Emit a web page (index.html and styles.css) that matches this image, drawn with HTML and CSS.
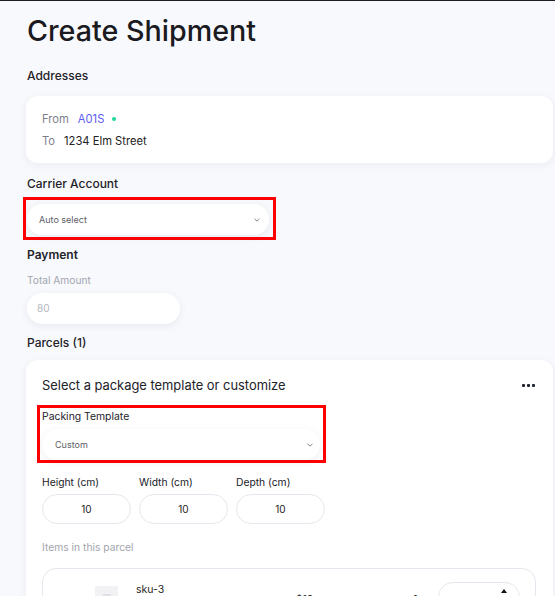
FILE: index.html
```html
<!DOCTYPE html>
<html lang="en">
<head>
    <meta charset="UTF-8">
    <meta name="viewport" content="width=device-width, initial-scale=1.0">
    <title>Create Shipment</title>
    <link rel="stylesheet" href="styles.css">
</head>
<body>
    <div class="page">
        <h1>Create Shipment</h1>

        <p class="section-label first">Addresses</p>
        <div class="card address-card">
            <div class="address-row">
                <span class="muted">From</span>
                <span class="sender">A01S</span>
                <span class="dot"></span>
            </div>
            <div class="address-row">
                <span class="muted">To</span>
                <span>1234 Elm Street</span>
            </div>
        </div>

        <p class="section-label">Carrier Account</p>
        <div class="highlight carrier-box">
            <div class="select carrier-select">
                <span>Auto select</span>
                <svg class="chevron" width="8" height="6" viewBox="0 0 8 6"><path d="M1.5 1.8 L4 4.2 L6.5 1.8" fill="none" stroke="#888" stroke-width="1"/></svg>
            </div>
        </div>

        <p class="section-label payment">Payment</p>
        <p class="field-label">Total Amount</p>
        <div class="input amount-input">80</div>

        <p class="section-label parcels">Parcels (1)</p>
        <div class="card parcel-card">
            <div class="parcel-head">
                <span>Select a package template or customize</span>
                <span class="more"><i></i><i></i><i></i></span>
            </div>

            <div class="highlight template-box">
                <p class="template-label">Packing Template</p>
                <div class="select template-select">
                    <span>Custom</span>
                    <svg class="chevron" width="8" height="6" viewBox="0 0 8 6"><path d="M1.5 1.8 L4 4.2 L6.5 1.8" fill="none" stroke="#888" stroke-width="1"/></svg>
                </div>
            </div>

            <div class="dims">
                <div class="dim">
                    <p class="dim-label">Height (cm)</p>
                    <div class="dim-input">10</div>
                </div>
                <div class="dim">
                    <p class="dim-label">Width (cm)</p>
                    <div class="dim-input">10</div>
                </div>
                <div class="dim">
                    <p class="dim-label">Depth (cm)</p>
                    <div class="dim-input">10</div>
                </div>
            </div>

            <p class="items-label">Items in this parcel</p>
            <div class="item">
                <div class="thumb"><span></span></div>
                <div class="item-info">
                    <p class="sku">sku-3</p>
                    <p class="item-meta">Item</p>
                </div>
                <div class="item-price">$10</div>
                <div class="item-total">1</div>
                <div class="qty"><span class="up"></span></div>
            </div>
        </div>
    </div>
</body>
</html>
```

FILE: styles.css
```css
body {
    margin: 0;
    background-color: #f8f9fd;
    font-family: Inter, "Noto Sans", sans-serif;
    color: #1f1f24;
    border-top: 1px solid #1c1c22;
    height: 595px;
    overflow: hidden;
}
.page {
    width: 527px;
    padding-left: 26px;
}
p {
    margin: 0;
}
h1 {
    margin: 13px 0 0 1px;
    font-size: 28.7px;
    font-weight: 500;
    line-height: 34px;
    color: #1a1a1f;
}
.section-label {
    margin: 12px 0 0 1px;
    font-size: 12px;
    font-weight: 500;
    line-height: 18px;
    color: #222228;
}
.section-label.first {
    margin-top: 18px;
    line-height: 20px;
}
.card {
    background: #fff;
    border-radius: 12px;
    box-shadow: 0 2px 10px rgba(30, 35, 60, 0.06);
}
.address-card {
    margin-top: 10px;
    padding: 12px 16px 11px;
}
.address-row {
    display: flex;
    align-items: center;
    gap: 8px;
    height: 22px;
    font-size: 11.2px;
    color: #222;
}
.address-row + .address-row {
    gap: 9px;
}
.muted {
    color: #7c7f8a;
}
.sender {
    color: #5a5cf0;
    margin-left: 1px;
}
.dot {
    width: 4px;
    height: 4px;
    border-radius: 50%;
    background: #21d99a;
}
.highlight {
    border: 3px solid #ff0000;
}
.carrier-box {
    width: 243px;
    margin: 4px 0 0 -3px;
    padding: 4px 4px 2px 0;
}
.carrier-box .select {
    margin-left: 1px;
}
.select {
    display: flex;
    align-items: center;
    justify-content: space-between;
    height: 31px;
    background: #fff;
    border-radius: 16px;
    box-shadow: 0 2px 8px rgba(30, 35, 60, 0.07);
    font-size: 9px;
    color: #5c5d66;
}
.carrier-select {
    padding: 0 8px 0 12px;
}
.chevron {
    display: block;
}
.payment {
    margin-top: 6px;
    font-weight: 600;
}
.field-label {
    margin: 8px 0 0 1px;
    font-size: 10.2px;
    line-height: 16px;
    color: #a3a5ad;
}
.input {
    margin: 5px 0 0 1px;
    width: 143px;
    height: 31px;
    padding-left: 10px;
    line-height: 31px;
    background: #fff;
    border-radius: 16px;
    box-shadow: 0 2px 8px rgba(30, 35, 60, 0.07);
    font-size: 10px;
    color: #b4b6bd;
}
.parcels {
    margin-top: 10px;
}
.parcel-card {
    margin-top: 8px;
    padding: 15px 16px 0;
    height: 300px;
}
.parcel-head {
    display: flex;
    justify-content: space-between;
    align-items: center;
    height: 20px;
    font-size: 12.9px;
    color: #222228;
}
.more {
    display: flex;
    gap: 2px;
    margin-right: 2px;
}
.more i {
    width: 3px;
    height: 3px;
    border-radius: 1px;
    background: #1f2230;
}
.template-box {
    width: 281px;
    margin: 10px 0 0 -5px;
    padding: 1px 0 0 2px;
    height: 51px;
}
.template-label {
    font-size: 10.4px;
    line-height: 16px;
    color: #222228;
}
.template-select {
    margin-top: 4px;
    width: 259px;
    padding: 0 6px 0 13px;
}
.dims {
    display: flex;
    gap: 8px;
    margin-top: 11px;
}
.dim-label {
    font-size: 10.3px;
    line-height: 16px;
    color: #222228;
}
.dim-input {
    margin-top: 4px;
    width: 87px;
    height: 28px;
    border: 1px solid #e6e7ee;
    border-radius: 15px;
    text-align: center;
    line-height: 28px;
    font-size: 10px;
    color: #222;
}
.items-label {
    margin-top: 15px;
    font-size: 10.3px;
    line-height: 16px;
    color: #a3a5ad;
}
.item {
    display: flex;
    align-items: flex-start;
    margin-top: 13px;
    width: 492px;
    height: 60px;
    border: 1px solid #e6e7ee;
    border-radius: 14px;
}
.thumb {
    width: 23px;
    height: 24px;
    margin: 17px 0 0 52px;
    background: #f2f2f4;
}
.thumb span {
    display: block;
    width: 8px;
    height: 8px;
    margin: 8px auto 0;
    background: #e0e0e4;
}
.item-info {
    margin: 14px 0 0 18px;
    width: 160px;
}
.sku {
    font-size: 10.5px;
    line-height: 14px;
}
.item-meta {
    font-size: 10px;
    color: #888;
}
.item-price {
    margin-top: 24px;
    width: 117px;
    font-size: 10px;
    font-weight: 600;
    color: #333;
}
.item-total {
    margin-top: 24px;
    width: 25px;
    font-size: 10px;
    font-weight: 600;
}
.qty {
    position: relative;
    margin: 13px 0 0 0;
    width: 80px;
    height: 30px;
    border: 1px solid #e6e7ee;
    border-radius: 15px;
}
.qty .up {
    position: absolute;
    top: 6px;
    right: 12px;
    border-left: 3px solid transparent;
    border-right: 3px solid transparent;
    border-bottom: 4px solid #111;
}
```
